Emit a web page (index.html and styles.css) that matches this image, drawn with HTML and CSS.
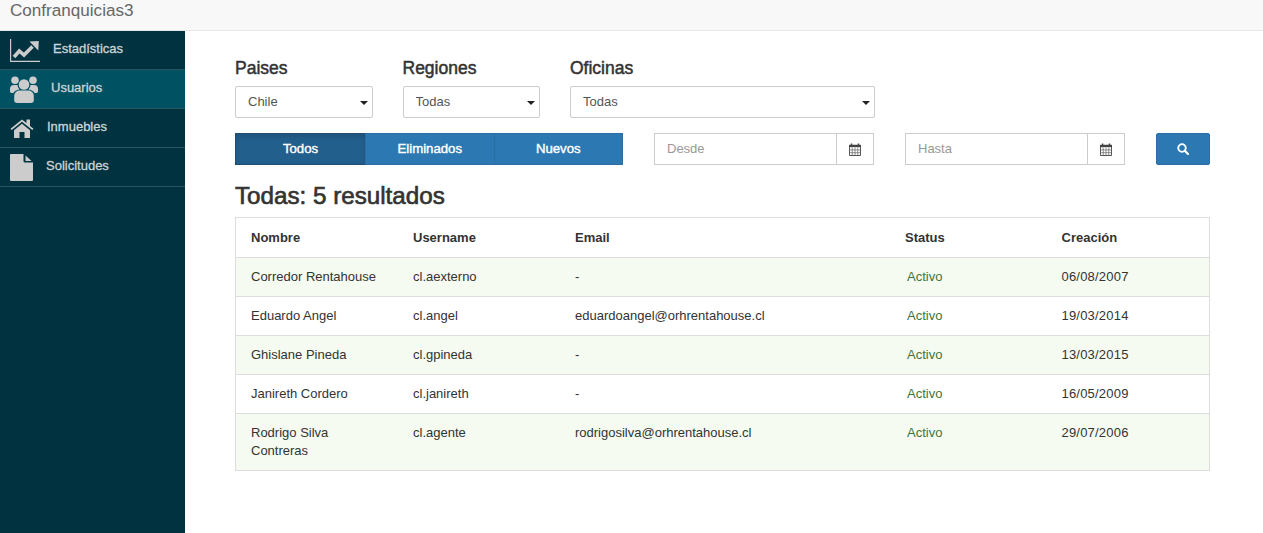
FILE: index.html
```html
<!DOCTYPE html>
<html lang="es">
<head>
    <meta charset="utf-8">
    <title>Confranquicias3</title>
    <link rel="stylesheet" href="styles.css">
</head>
<body>
    <header class="topbar">Confranquicias3</header>
    <div class="layout">
        <nav class="sidebar">
            <a class="nav-item" href="#">
                <svg class="nav-icon" width="30" height="23" viewBox="0 0 30 23">
                    <path d="M.6 0V22.4H30" fill="none" stroke="#ccc" stroke-width="1.2"/>
                    <path d="M4 18 9.3 12 14 16 22.5 7.5" fill="none" stroke="#ccc" stroke-width="3.6"/>
                    <path d="M19.5 2.5 28.8 2 28.3 11.5Z" fill="#ccc"/>
                </svg>
                Estadísticas
            </a>
            <a class="nav-item active" href="#">
                <svg class="nav-icon" width="28" height="27" viewBox="0 0 28 27">
                    <circle cx="5" cy="4.2" r="3.8" fill="#ccc"/>
                    <circle cx="23" cy="4.2" r="3.8" fill="#ccc"/>
                    <circle cx="14" cy="8.5" r="5.3" fill="#ccc"/>
                    <path d="M0 12.5C0 10 2 9 4 9H7.5C7.8 11 8.5 12.3 9.5 13.5 6 14 4 15.5 3.4 17H1.5C.5 17 0 16 0 15ZM28 12.5C28 10 26 9 24 9H20.5C20.2 11 19.5 12.3 18.5 13.5 22 14 24 15.5 24.6 17H26.5C27.5 17 28 16 28 15Z" fill="#ccc"/>
                    <path d="M4.2 20C4.2 16.5 7 14.5 10 14.5H18C21 14.5 23.8 16.5 23.8 20V24.5C23.8 26 22.5 27 21 27H7C5.5 27 4.2 26 4.2 24.5Z" fill="#ccc"/>
                </svg>
                Usuarios
            </a>
            <a class="nav-item" href="#">
                <svg class="nav-icon" width="24" height="19" viewBox="0 0 24 19">
                    <path d="M.5 9.8 12 .5 16.5 4.1V.5H20V7L23.5 9.8 22.3 11 12 2.8 1.7 11Z" fill="#ccc"/>
                    <path d="M4 11.2 12 4.7 20 11.2V19H14.5V13H9.5V19H4Z" fill="#ccc"/>
                </svg>
                Inmuebles
            </a>
            <a class="nav-item" href="#">
                <svg class="nav-icon" width="23" height="27" viewBox="0 0 23 27">
                    <path d="M0 1A1 1 0 0 1 1 0H13.5V7A1.5 1.5 0 0 0 15 8.5H23V26A1 1 0 0 1 22 27H1A1 1 0 0 1 0 26Z" fill="#ccc"/>
                    <path d="M15.5 1.5 21.5 7H15.5Z" fill="#ccc"/>
                </svg>
                Solicitudes
            </a>
        </nav>
        <main class="content">
            <div class="filters">
                <div class="filter filter-sm">
                    <label class="filter-label" for="pais">Paises</label>
                    <div class="select-wrap">
                        <select id="pais" class="select"><option>Chile</option></select>
                    </div>
                </div>
                <div class="filter filter-sm">
                    <label class="filter-label" for="region">Regiones</label>
                    <div class="select-wrap">
                        <select id="region" class="select"><option>Todas</option></select>
                    </div>
                </div>
                <div class="filter filter-lg">
                    <label class="filter-label" for="oficina">Oficinas</label>
                    <div class="select-wrap">
                        <select id="oficina" class="select"><option>Todas</option></select>
                    </div>
                </div>
            </div>

            <div class="toolbar">
                <div class="btn-group">
                    <button class="btn active">Todos</button>
                    <button class="btn">Eliminados</button>
                    <button class="btn">Nuevos</button>
                </div>
                <div class="date-input">
                    <input type="text" placeholder="Desde">
                    <span class="date-addon">
                        <svg width="12" height="13" viewBox="0 0 13 14">
                            <path d="M.5 2.5H12.5V13.5H.5Z" fill="#fff" stroke="#444"/>
                            <path d="M0 2H13V4.5H0Z" fill="#444"/>
                            <path d="M2.8 .5V3M10.2 .5V3" stroke="#444" stroke-width="1.6" fill="none"/>
                            <path d="M3.5 5V13M6.5 5V13M9.5 5V13M1 7.5H12M1 10.5H12" stroke="#555" stroke-width=".7" fill="none"/>
                        </svg>
                    </span>
                </div>
                <div class="date-input">
                    <input type="text" placeholder="Hasta">
                    <span class="date-addon">
                        <svg width="12" height="13" viewBox="0 0 13 14">
                            <path d="M.5 2.5H12.5V13.5H.5Z" fill="#fff" stroke="#444"/>
                            <path d="M0 2H13V4.5H0Z" fill="#444"/>
                            <path d="M2.8 .5V3M10.2 .5V3" stroke="#444" stroke-width="1.6" fill="none"/>
                            <path d="M3.5 5V13M6.5 5V13M9.5 5V13M1 7.5H12M1 10.5H12" stroke="#555" stroke-width=".7" fill="none"/>
                        </svg>
                    </span>
                </div>
                <button class="btn btn-search">
                    <svg width="12" height="12" viewBox="0 0 12 12">
                        <circle cx="5" cy="5" r="3.8" fill="none" stroke="#fff" stroke-width="1.8"/>
                        <path d="M7.8 7.8 11 11" stroke="#fff" stroke-width="2.2" stroke-linecap="round"/>
                    </svg>
                </button>
            </div>

            <h2 class="results-title">Todas: 5 resultados</h2>

            <table class="results">
                <colgroup>
                    <col class="col-name">
                    <col class="col-user">
                    <col class="col-email">
                    <col class="col-status">
                    <col>
                </colgroup>
                <thead>
                    <tr><th>Nombre</th><th>Username</th><th>Email</th><th>Status</th><th>Creación</th></tr>
                </thead>
                <tbody>
                    <tr><td>Corredor Rentahouse</td><td>cl.aexterno</td><td>-</td><td><span class="status">Activo</span></td><td class="date">06/08/2007</td></tr>
                    <tr><td>Eduardo Angel</td><td>cl.angel</td><td>eduardoangel@orhrentahouse.cl</td><td><span class="status">Activo</span></td><td class="date">19/03/2014</td></tr>
                    <tr><td>Ghislane Pineda</td><td>cl.gpineda</td><td>-</td><td><span class="status">Activo</span></td><td class="date">13/03/2015</td></tr>
                    <tr><td>Janireth Cordero</td><td>cl.janireth</td><td>-</td><td><span class="status">Activo</span></td><td class="date">16/05/2009</td></tr>
                    <tr><td>Rodrigo Silva Contreras</td><td>cl.agente</td><td>rodrigosilva@orhrentahouse.cl</td><td><span class="status">Activo</span></td><td class="date">29/07/2006</td></tr>
                </tbody>
            </table>
        </main>
    </div>
</body>
</html>
```
FILE: styles.css
```css
* { box-sizing: border-box; }
html, body { height: 100%; }
body { margin: 0; display: flex; flex-direction: column; background: #fff; color: #333; font-family: "Liberation Sans", Arial, sans-serif; font-size: 13px; line-height: 18px; overflow: hidden; }

.topbar { height: 31px; flex: none; padding: 1px 10px 0; background: #f8f8f8; border-bottom: 1px solid #e7e7e7; color: #666; font-size: 17.1px; line-height: 20px; }

.layout { flex: 1; display: flex; min-height: 0; }

.sidebar { width: 185px; flex: none; background: #00333f; }
.nav-item { height: 39px; display: flex; align-items: center; gap: 13px; padding: 0 0 2px 10px; border-bottom: 1px solid #2a5560; color: #ccd5d8; font-size: 13px; text-decoration: none; -webkit-text-stroke: .3px; }
.nav-item.active { background: #005263; }
.nav-icon { flex: none; margin-bottom: -2px; }

.content { flex: 1; padding: 27px 53px 0 50px; min-width: 0; }

.filters { display: flex; gap: 30px; }
.filter-sm { width: 137.5px; }
.filter-lg { width: 305px; }
.filter-label { display: block; height: 28px; font-size: 17.5px; line-height: 20px; -webkit-text-stroke: .5px; }
.select-wrap { position: relative; }
.select-wrap::after { content: ""; position: absolute; right: 5px; top: 15px; border-top: 4px solid #222; border-left: 4px solid transparent; border-right: 4px solid transparent; pointer-events: none; }
.select { display: block; width: 100%; height: 32px; padding: 0 12px; appearance: none; background: #fff; border: 1px solid #ccc; border-radius: 2px; color: #555; font: inherit; }

.toolbar { display: flex; margin-top: 15px; }
.btn { height: 32px; padding: 0; background: #2c78b2; border: 1px solid #2e6da4; color: #fff; font: inherit; font-size: 13.2px; -webkit-text-stroke: .4px; }
.btn-group { display: flex; width: 388px; margin-right: 31px; }
.btn-group .btn { flex: 1 1 0; margin-left: -1px; }
.btn-group .btn:first-child { flex: 0 0 131px; margin-left: 0; }
.btn.active { background: #235f8c; border-color: #204d74; box-shadow: inset 0 3px 5px rgba(0,0,0,.125); }
.btn-search { width: 54px; margin-left: 31px; border-radius: 2px; display: flex; align-items: center; justify-content: center; }

.date-input { display: flex; width: 220px; height: 32px; border: 1px solid #ccc; }
.date-input + .date-input { margin-left: 31px; }
.date-input input { flex: 1; min-width: 0; height: 30px; padding: 0 12px 2px; border: 0; outline: 0; color: #555; font: inherit; }
.date-input input::placeholder { color: #999; }
.date-addon { width: 37px; flex: none; display: flex; align-items: center; justify-content: center; border-left: 1px solid #ccc; }

.results-title { margin: 18px 0 8px; font-size: 24.2px; line-height: 26px; font-weight: normal; -webkit-text-stroke: .65px; }

.results { width: 100%; table-layout: fixed; border-collapse: collapse; border: 1px solid #ddd; }
.results th, .results td { padding: 10px 15px; border-top: 1px solid #ddd; text-align: left; vertical-align: top; line-height: 18px; }
.results th { height: 40px; padding-top: 11px; }
.results td { height: 39px; }
.results tbody tr:nth-child(odd) { background: #f5fbf1; }
.results .date { letter-spacing: .2px; }
.col-name { width: 162.5px; }
.col-user { width: 162px; }
.col-email { width: 330px; }
.col-status { width: 156.5px; }
.status { padding-left: 2px; color: #3c763d; }
```
